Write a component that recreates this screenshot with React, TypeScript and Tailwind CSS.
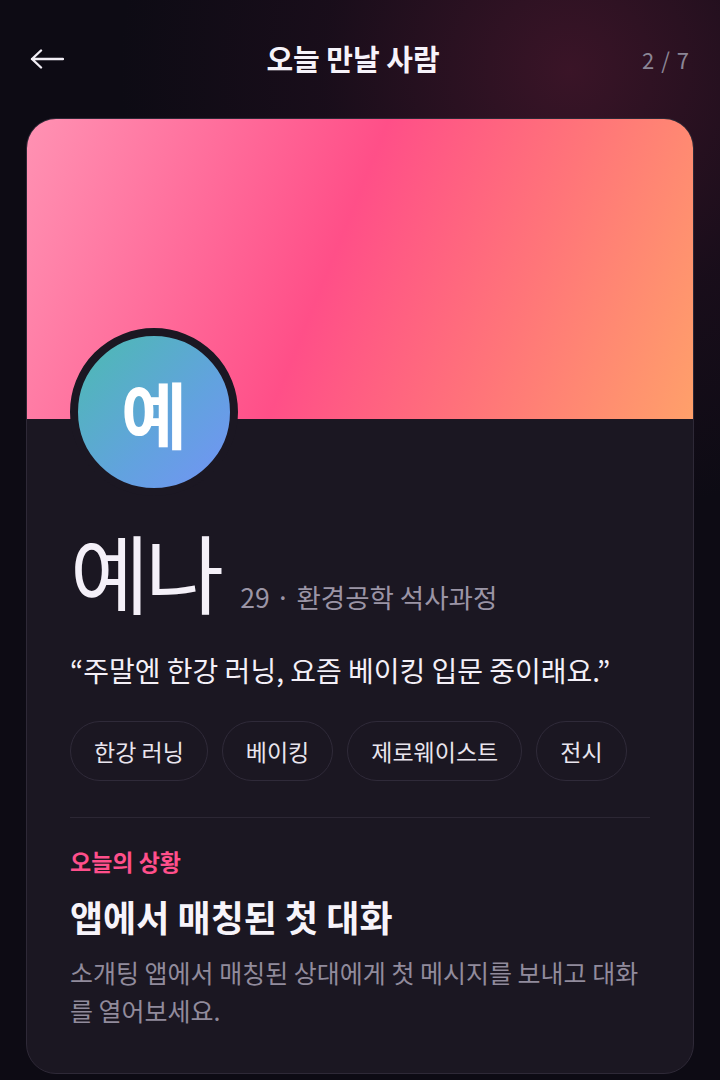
import React from "react";

const font = { fontFamily: '"Noto Sans CJK KR", "Noto Sans", sans-serif' };

export default function App() {
  const tags = ["한강 러닝", "베이킹", "제로웨이스트", "전시"];
  return (
    <div
      className="relative w-[720px] h-[1080px] overflow-hidden bg-[#0d0b14] text-white"
      style={font}
    >
      <div className="pointer-events-none absolute -top-[380px] -right-[300px] w-[900px] h-[900px] rounded-full bg-[radial-gradient(closest-side,rgba(95,28,55,0.55),rgba(60,20,45,0.25)_55%,rgba(13,11,20,0)_100%)]" />
      <div className="relative">
        <div className="flex h-[118px] items-center justify-between px-[30px]">
          <svg width="34" height="20" viewBox="0 0 34 20" fill="none" className="text-[#f1eef5]">
            <path d="M33 10H2M11 1.5L2 10l9 8.5" stroke="currentColor" strokeWidth="2.4" strokeLinecap="round" strokeLinejoin="round" />
          </svg>
          <div className="text-[29px] font-bold text-[#f6f3fa]">오늘 만날 사람</div>
          <div className="text-[22px] text-[#8b8695] tracking-[1px]">2 / 7</div>
        </div>

        <div className="mx-[26px] h-[956px] overflow-hidden rounded-[30px] border border-[#2e2937] bg-[#1b1722]">
          <div className="h-[300px] bg-[linear-gradient(112deg,#ff92b3_0%,#ff4f88_46%,#ff7579_72%,#ffa06a_100%)]" />
          <div className="px-[43px]">
            <div className="-mt-[91px] flex h-[168px] w-[168px] items-center justify-center rounded-full border-[8px] border-[#1b1722] bg-[linear-gradient(135deg,#4cbbb0_0%,#62a2df_60%,#7393f6_100%)]">
              <span className="text-[72px] font-bold leading-none text-white">예</span>
            </div>
            <div className="mt-[32px] flex items-baseline">
              <span className="text-[86px] leading-none tracking-[-4px] text-[#f4f0f8]">예나</span>
              <span className="ml-[20px] text-[26.5px] text-[#9b95a6]">29 · 환경공학 석사과정</span>
            </div>
            <div className="mt-[33px] text-[28px] leading-[40px] text-[#f4f0f8]">“주말엔 한강 러닝, 요즘 베이킹 입문 중이래요.”</div>
            <div className="mt-[31px] flex gap-[14px]">
              {tags.map((t) => (
                <div
                  key={t}
                  className="flex h-[60px] items-center rounded-full border border-[#2f2a39] px-[23px] text-[23px] text-[#e9e5ee]"
                >
                  {t}
                </div>
              ))}
            </div>
            <div className="mt-[36px] h-px w-full bg-[#2c2734]" />
            <div className="mt-[27px] text-[23px] leading-[32px] font-bold text-[#ff4f8b]">오늘의 상황</div>
            <div className="mt-[15px] text-[36px] leading-[48px] font-bold text-[#f7f4fa]">앱에서 매칭된 첫 대화</div>
            <div className="mt-[13px] text-[25px] leading-[38px] text-[#918b9c]">
              소개팅 앱에서 매칭된 상대에게 첫 메시지를 보내고 대화를 열어보세요.
            </div>
          </div>
        </div>
      </div>
    </div>
  );
}
